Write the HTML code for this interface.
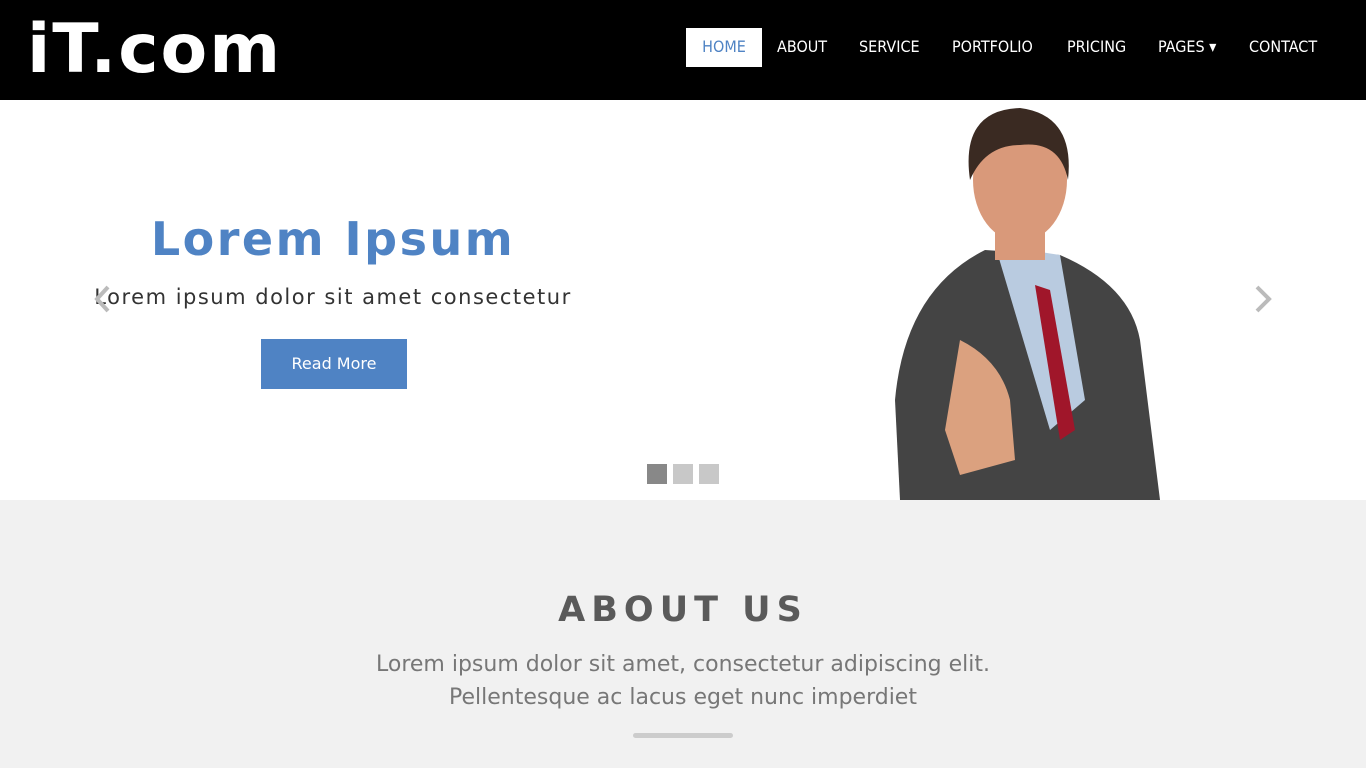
<!DOCTYPE html>
<html><head><style>
*{margin:0;padding:0;box-sizing:border-box}
body{width:1366px;height:768px;overflow:hidden;font-family:"DejaVu Sans","Liberation Sans",sans-serif;background:#f1f1f1}
.nav{position:absolute;top:0;left:0;width:1366px;height:100px;background:#000}
.logo{position:absolute;left:27px;top:10px;color:#fff;font-weight:bold;font-size:68px;letter-spacing:2px;font-family:"DejaVu Sans",sans-serif}
.menu a{position:absolute;top:28px;height:39px;line-height:37px;color:#fff;font-size:16px;text-decoration:none;font-family:"DejaVu Sans Condensed","DejaVu Sans",sans-serif}
.hero{position:absolute;top:100px;left:0;width:1366px;height:400px;background:#fff;overflow:hidden}
h1{position:absolute;left:0;width:666px;text-align:center;top:112px;color:#4f83c4;font-size:46px;letter-spacing:2.5px;font-weight:bold}
.sub{position:absolute;left:0;width:666px;text-align:center;top:185px;color:#333;font-size:21px;letter-spacing:1.5px}
.btn{position:absolute;left:261px;top:239px;width:146px;height:50px;background:#4f83c4;color:#fff;font-size:16px;line-height:50px;text-align:center}
.dot{position:absolute;top:364px;width:20px;height:20px;background:#c8c8c8}
.about h2{position:absolute;top:590px;left:0;width:1366px;text-align:center;color:#5a5a5a;font-size:35px;letter-spacing:6px;font-weight:bold}
.about p{position:absolute;top:648px;left:0;width:1366px;text-align:center;color:#777;font-size:22px;line-height:33px}
</style></head><body>
<div class="nav"><div class="logo">iT.com</div>
<div class="menu">
<a style="left:686px;width:76px;background:#fff;color:#4f83c4;text-align:center">HOME</a>
<a style="left:777px">ABOUT</a><a style="left:859px">SERVICE</a><a style="left:952px">PORTFOLIO</a><a style="left:1067px">PRICING</a><a style="left:1158px">PAGES ▾</a><a style="left:1249px">CONTACT</a>
</div></div>
<div class="hero">
<h1>Lorem Ipsum</h1>
<div class="sub">Lorem ipsum dolor sit amet consectetur</div>
<div class="btn">Read More</div>
<svg style="position:absolute;left:0;top:0" width="1366" height="400">
<polyline points="108,187 97,199 108,211" fill="none" stroke="#bbb" stroke-width="4"/>
<polyline points="1257,187 1269,199 1257,211" fill="none" stroke="#bbb" stroke-width="4"/>
<path d="M900,400 L895,300 Q905,190 985,150 L1060,155 Q1130,185 1140,240 L1160,400 Z" fill="#444"/>
<path d="M995,145 L1060,155 L1085,300 L1050,330 Z" fill="#b9cbe0"/>
<path d="M1035,185 L1050,190 L1075,330 L1060,340 Z" fill="#a0162a"/>
<path d="M960,240 Q1000,260 1010,300 L1015,360 L960,375 L945,330 Z" fill="#dba17f"/>
<ellipse cx="1020" cy="80" rx="47" ry="62" fill="#d9997a"/>
<path d="M970,80 Q960,10 1020,8 Q1075,15 1068,80 Q1060,40 1020,45 Q985,45 970,80Z" fill="#3a2a22"/>
<rect x="995" y="130" width="50" height="30" fill="#d9997a"/>
</svg>
<div class="dot" style="left:647px;background:#888"></div><div class="dot" style="left:673px"></div><div class="dot" style="left:699px"></div>
</div>
<div class="about"><h2>ABOUT US</h2>
<p>Lorem ipsum dolor sit amet, consectetur adipiscing elit.<br>Pellentesque ac lacus eget nunc imperdiet</p>
<div style="position:absolute;left:633px;top:733px;width:100px;height:5px;background:#ccc;border-radius:3px"></div></div>
</body></html>
